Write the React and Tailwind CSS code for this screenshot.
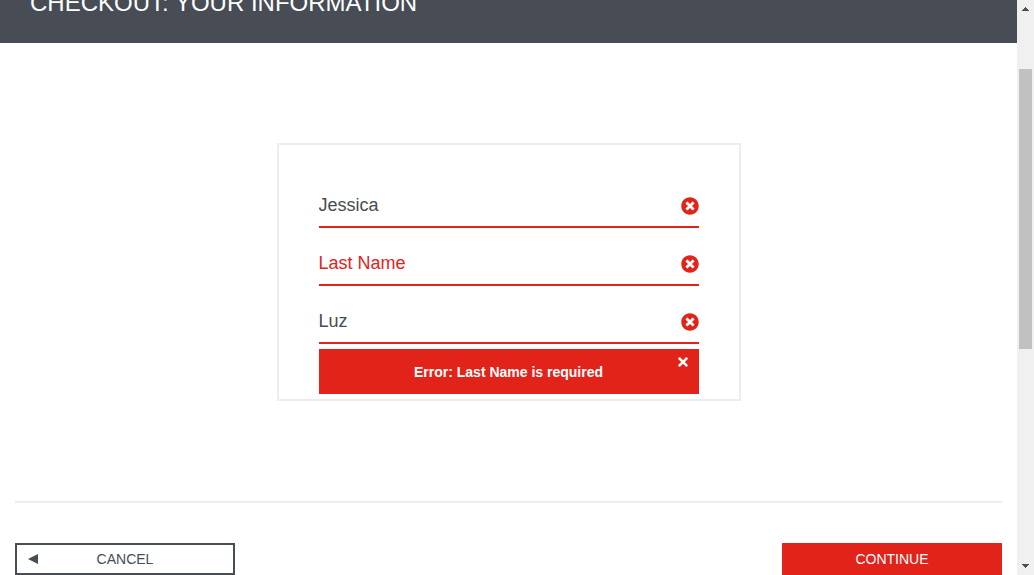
import React, { useState } from "react";
import { FaTimes, FaTimesCircle } from "react-icons/fa";

function Field({ id, label, initial }) {
  const [value, setValue] = useState(initial);
  return (
    <div className="relative mb-[15px] last:mb-[5px]">
      <input
        id={id}
        type="text"
        aria-label={label}
        placeholder={label}
        value={value}
        onChange={(e) => setValue(e.target.value)}
        className="block h-[43px] w-full border-b-2 border-[#e2231a] bg-white pr-8 text-lg text-[#474c55] outline-none placeholder:text-[#e2231a]"
      />
      <FaTimesCircle aria-hidden="true" className="absolute right-0 top-3 size-[18px] text-[#e2231a]" />
    </div>
  );
}

function ScrollBar() {
  return (
    <div aria-hidden="true" className="flex w-[17px] shrink-0 flex-col items-center justify-between bg-[#f0f0f0]">
      <svg className="h-[17px] w-[17px]" viewBox="0 0 17 17" shapeRendering="crispEdges">
        <path d="M8 7h1v1h1v1h1v1h1v1H5v-1h1V9h1V8h1z" fill="#505050" />
      </svg>
      <div className="w-full flex-1 px-[2px] pt-[52px]">
        <div className="h-[280px] bg-[#c1c1c1]" />
      </div>
      <svg className="h-[17px] w-[17px]" viewBox="0 0 17 17" shapeRendering="crispEdges">
        <path d="M5 6h7v1h-1v1h-1v1H9v1H8V9H7V8H6V7H5z" fill="#505050" />
      </svg>
    </div>
  );
}

export default function App() {
  const [showError, setShowError] = useState(true);
  return (
    <div className="flex h-screen overflow-hidden bg-white font-['Liberation_Sans',Arial,sans-serif] text-[#474c55]">
      <div className="min-w-0 flex-1 overflow-hidden">
        <header className="-mt-3 bg-[#474c55] px-[30px] pb-[25px]">
          <h1 className="text-2xl leading-[30px] text-white">CHECKOUT: YOUR INFORMATION</h1>
        </header>
        <main className="px-[15px]">
          <form onSubmit={(e) => e.preventDefault()}>
            <div className="mx-auto mt-[100px] max-w-[464px] border-2 border-[#ededed] px-10 pb-[5px] pt-10">
              <div>
                <Field id="first-name" label="First Name" initial="Jessica" />
                <Field id="last-name" label="Last Name" initial="" />
                <Field id="postal-code" label="Zip/Postal Code" initial="Luz" />
              </div>
              {showError && (
                <div role="alert" className="relative flex h-[45px] items-center justify-center bg-[#e2231a]">
                  <h3 className="text-sm font-bold text-white">Error: Last Name is required</h3>
                  <button
                    type="button"
                    aria-label="Dismiss error"
                    onClick={() => setShowError(false)}
                    className="absolute right-[9px] top-[6px] text-white"
                  >
                    <FaTimes className="size-[14px]" />
                  </button>
                </div>
              )}
            </div>
            <div className="mt-[100px] flex justify-between border-t-2 border-[#ededed] pt-10">
              <button
                type="button"
                className="relative h-8 w-[220px] border-2 border-[#474c55] bg-white text-sm"
              >
                <svg aria-hidden="true" viewBox="0 0 10 10" className="absolute left-[11px] top-[9px] size-[10px]">
                  <path d="M10 0v10L0 5z" fill="currentColor" />
                </svg>
                CANCEL
              </button>
              <button type="submit" className="h-8 w-[220px] bg-[#e2231a] text-sm text-white">
                CONTINUE
              </button>
            </div>
          </form>
        </main>
      </div>
      <ScrollBar />
    </div>
  );
}
